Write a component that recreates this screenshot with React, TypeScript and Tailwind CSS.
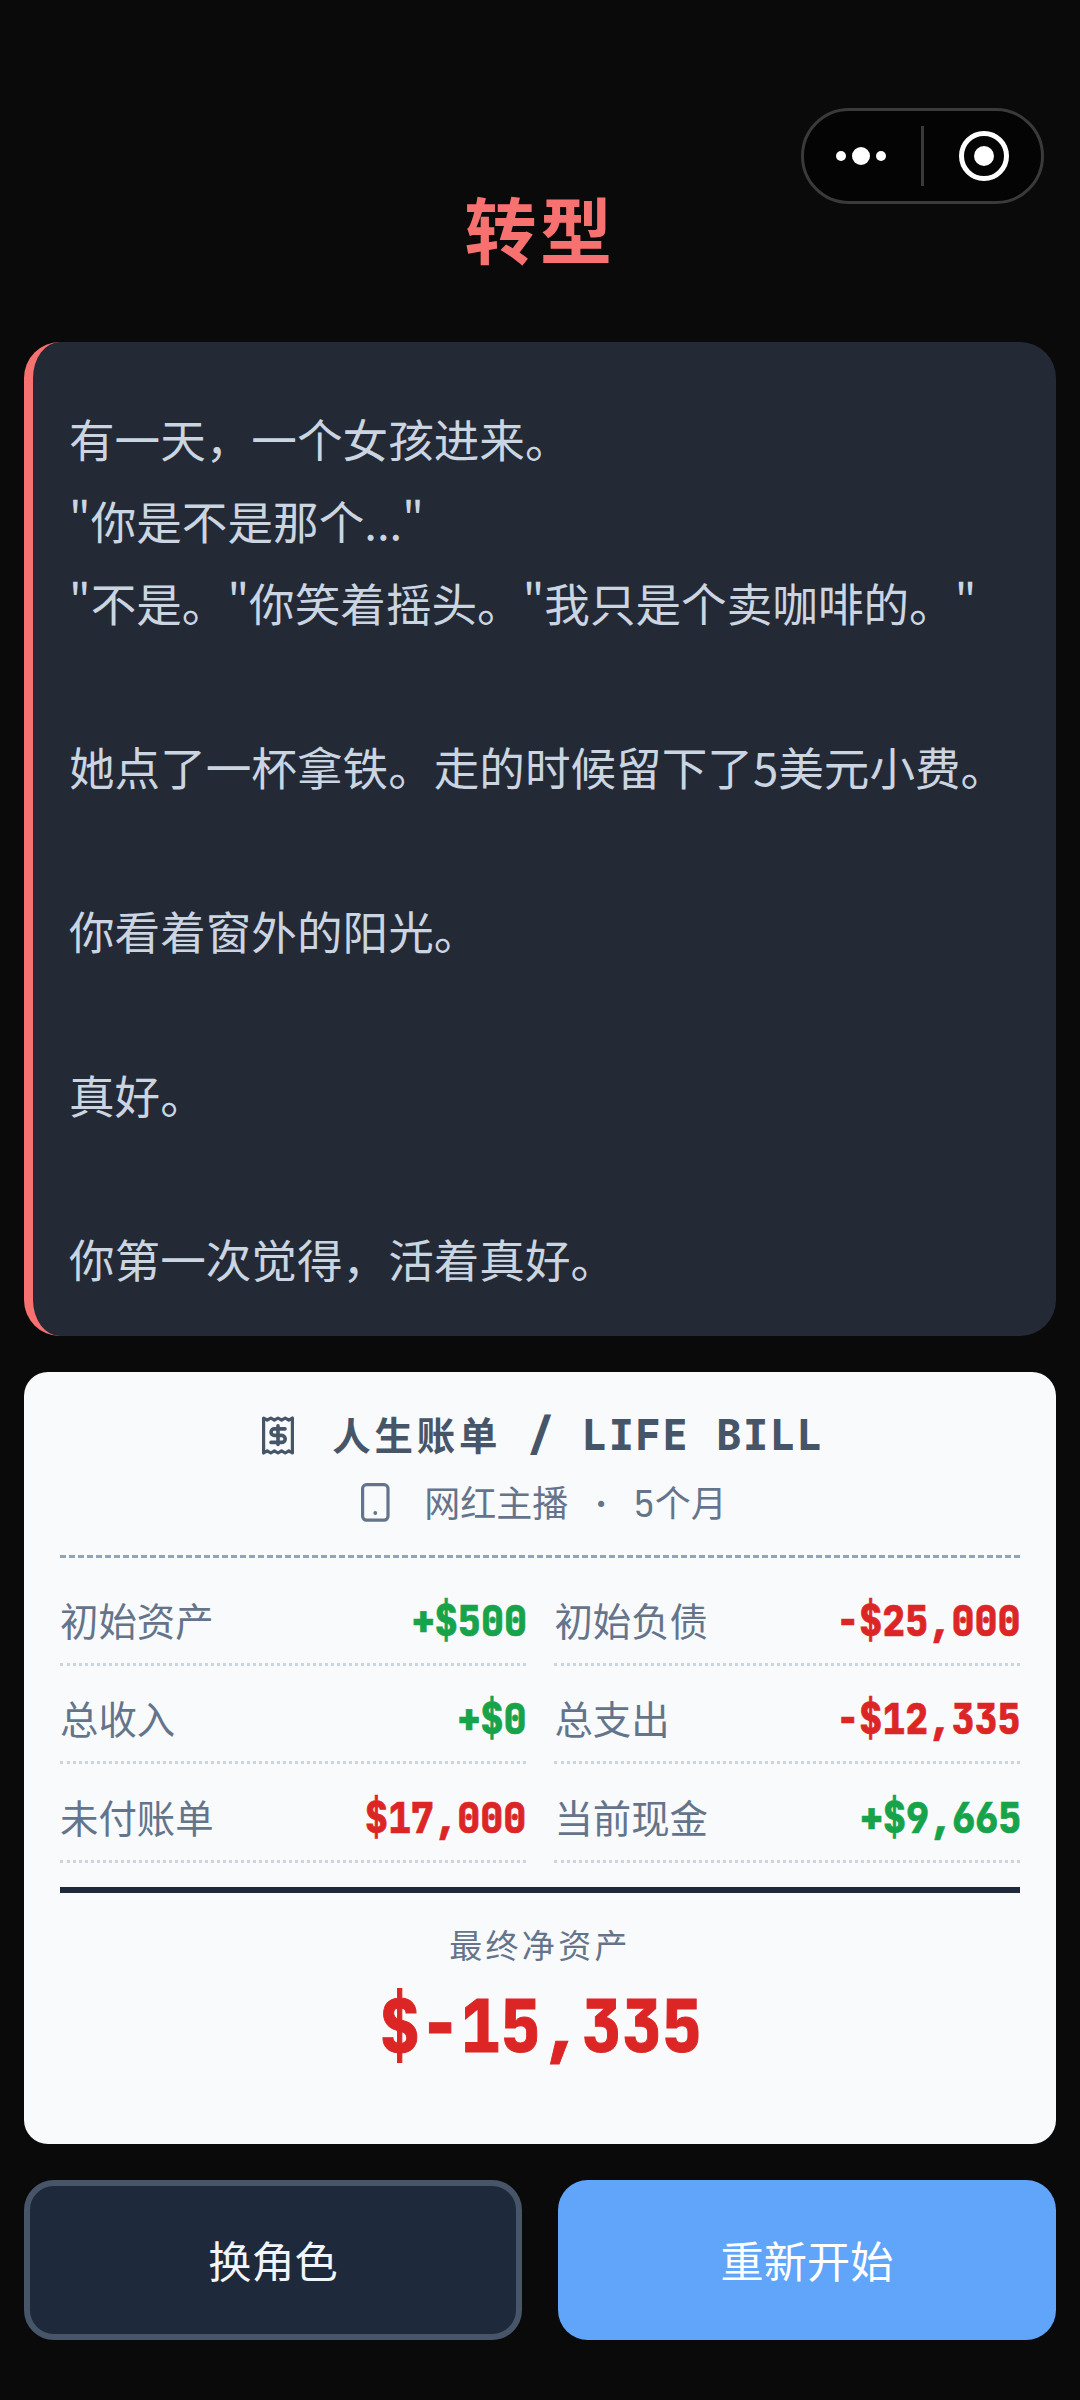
import React from "react";

type BillItem = {
    label: string;
    value: string;
    positive?: boolean;
};

const story = [
    '有一天，一个女孩进来。',
    '"你是不是那个..."',
    '"不是。"你笑着摇头。"我只是个卖咖啡的。"',
    '',
    '她点了一杯拿铁。走的时候留下了5美元小费。',
    '',
    '你看着窗外的阳光。',
    '',
    '真好。',
    '',
    '你第一次觉得，活着真好。',
];

const billItems: BillItem[] = [
    { label: '初始资产', value: '+$500', positive: true },
    { label: '初始负债', value: '-$25,000' },
    { label: '总收入', value: '+$0', positive: true },
    { label: '总支出', value: '-$12,335' },
    { label: '未付账单', value: '$17,000' },
    { label: '当前现金', value: '+$9,665', positive: true },
];

const ReceiptIcon = () => (
    <svg className="ml-1.5 shrink-0" width="32" height="39" viewBox="0 0 32 39" fill="none" stroke="currentColor" strokeLinejoin="round" strokeLinecap="round">
        <path d="M1.6 2l3.6 2.2L8.8 2l3.6 2.2L16 2l3.6 2.2L23.2 2l3.6 2.2L30.4 2v35l-3.6-2.2-3.6 2.2-3.6-2.2L16 37l-3.6-2.2L8.8 37l-3.6-2.2L1.6 37z" strokeWidth="3.2" />
        <path d="M23 12.9H12.3a3.2 3.2 0 0 0 0 6.5h7.4a3.5 3.5 0 0 1 0 7H9M16 9.7v18.8" strokeWidth="3.6" />
    </svg>
);

const PhoneIcon = () => (
    <svg className="ml-2 shrink-0" width="29" height="39" viewBox="0 0 29 39" fill="none">
        <rect x="1.6" y="1.6" width="25.4" height="35.6" rx="4" stroke="currentColor" strokeWidth="3.2" />
        <circle cx="14.3" cy="30" r="1.9" fill="currentColor" />
    </svg>
);

const Capsule = () => (
    <div className="flex h-24 w-[243px] items-center rounded-full border-[3px] border-[#3a3a3a] bg-[#040404]">
        <div className="flex w-[117px] items-center justify-center gap-1.5 pr-[3px]">
            <span className="size-2.5 rounded-full bg-white" />
            <span className="size-[18px] rounded-full bg-white" />
            <span className="size-2.5 rounded-full bg-white" />
        </div>
        <div className="h-[60px] w-[3px] bg-[#3a3a3a]" />
        <div className="flex flex-1 items-center justify-center pl-[3px]">
            <span className="flex size-[50px] items-center justify-center rounded-full border-[5px] border-white">
                <span className="size-5 rounded-full bg-white" />
            </span>
        </div>
    </div>
);

const App = () => {
    return (
        <div className="flex h-[2400px] w-[1080px] flex-col bg-[#0a0a0a] px-6 font-['Noto_Sans_CJK_SC',sans-serif]" lang="zh-CN">
            <div className="flex h-[204px] items-end justify-end pr-3">
                <Capsule />
            </div>
            <h1 className="-mt-6 h-[108px] text-center text-[72px] leading-[94px] font-bold tracking-[3.6px] text-[#f87171]">转型</h1>

            <div className="mt-[54px] h-[994px] rounded-[36px] border-l-[9px] border-[#f87171] bg-[#232a35] px-9 pt-[55px] text-[45.6px] leading-[82px] text-[#cbd5e1]">
                {story.map((line, i) => (
                    <p key={i} className="h-[82px] whitespace-nowrap">{line}</p>
                ))}
            </div>

            <div className="mt-9 flex h-[772px] flex-col rounded-3xl bg-[#f9fafc] px-9 pt-9">
                <div className="flex h-[54px] items-center justify-center gap-[38px] text-[#475569]">
                    <ReceiptIcon />
                    <div className="pb-0.5 text-[38.4px] leading-[50px] font-bold tracking-[3.84px] whitespace-pre">
                        人生账单<span className="font-['JetBrains_Mono',monospace] text-[42px] font-extrabold tracking-[1.68px]"> / LIFE BILL</span>
                    </div>
                </div>
                <div className="mt-5 flex h-10 items-center justify-center gap-[34px] text-[#64748b]">
                    <PhoneIcon />
                    <div className="text-4xl leading-10 whitespace-pre">
                        网红主播<span className="font-['JetBrains_Mono',monospace] text-[37px] tracking-[-0.6px]"> · 5</span>个月
                    </div>
                </div>
                <div className="mt-[33px] border-b-[3px] border-dashed border-[#94a3b8]" />

                <div className="mt-[22px] grid grid-cols-2 gap-x-[28.8px] gap-y-[12.4px]">
                    {billItems.map((item) => (
                        <div key={item.label} className="flex h-[86px] items-baseline justify-between border-b-[3px] border-dotted border-[#cbd5e1] leading-[78px]">
                            <span className="text-[38.4px] text-[#64748b]">{item.label}</span>
                            <span className={`-mr-px origin-right scale-x-[.915] font-['JetBrains_Mono',monospace] text-[42px] font-extrabold [-webkit-text-stroke:0.7px_currentColor] ${item.positive ? 'text-[#16a34a]' : 'text-[#dc2626]'}`}>
                                {item.value}
                            </span>
                        </div>
                    ))}
                </div>

                <div className="mt-6 border-t-[6px] border-[#1e293b] pt-[26px] text-center">
                    <div className="text-[33px] leading-[50px] tracking-[3.3px] text-[#64748b]">最终净资产</div>
                    <div className="scale-x-[.92] pl-0.5 font-['JetBrains_Mono',monospace] text-[73px] leading-[114px] font-extrabold text-[#dc2626] [-webkit-text-stroke:1px_currentColor]">$-15,335</div>
                </div>
            </div>

            <div className="mt-9 grid grid-cols-2 gap-9 text-[43.2px]">
                <button className="h-40 rounded-[30px] border-[6px] border-[#475569] bg-[#1e293b] pb-px text-[#f1f5f9]">换角色</button>
                <button className="h-40 rounded-[30px] bg-[#60a5fa] pb-px text-white">重新开始</button>
            </div>
        </div>
    );
};

export default App;
